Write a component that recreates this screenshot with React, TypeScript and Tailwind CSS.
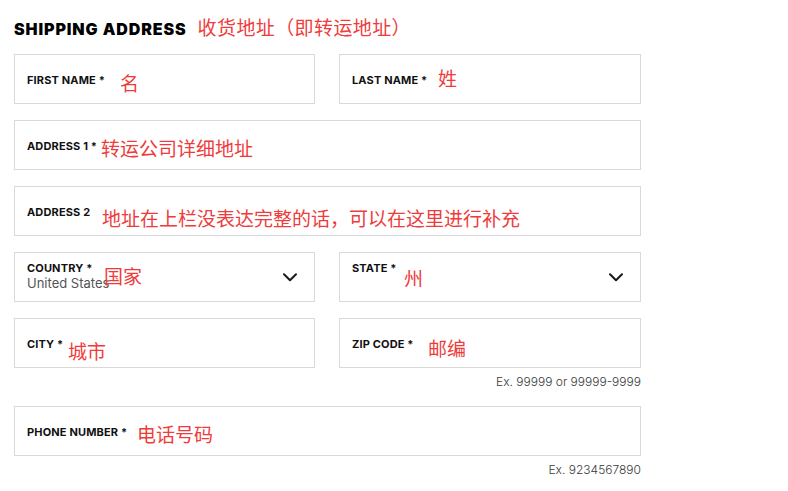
import type { ReactNode } from 'react'

const LATIN = "font-['Inter',_'Noto_Sans',_sans-serif]"
const NOTE = "font-['Noto_Sans_CJK_SC',_sans-serif] text-[19px] leading-none text-[#ef3b3b]"

type NoteProps = { text: string; className: string }

// red annotation laid over the field, like a marked-up screenshot
function Note({ text, className }: NoteProps) {
  return <span className={`absolute whitespace-nowrap ${NOTE} ${className}`}>{text}</span>
}

function Chevron() {
  return (
    <svg width="14" height="9" viewBox="0 0 14 9" fill="none" className="absolute right-[17px] top-[20px]">
      <path d="M1 1.2l6 6 6-6" stroke="#1a1a1a" strokeWidth="2" strokeLinecap="round" strokeLinejoin="round" />
    </svg>
  )
}

function Field({ label, children, className = '' }: { label: string; children?: ReactNode; className?: string }) {
  return (
    <div className={`relative flex h-[50px] items-center border border-[#d9d9d9] bg-white pl-[12px] pt-[2px] ${className}`}>
      <span className={`${LATIN} text-[11px] font-bold tracking-[0.15px] text-[#111]`}>{label}</span>
      {children}
    </div>
  )
}

function SelectField({ label, value, children }: { label: string; value?: string; children?: ReactNode }) {
  return (
    <div className="relative h-[50px] border border-[#d9d9d9] bg-white pl-[12px] pt-[8px]">
      <div className={`${LATIN} text-[11px] leading-[14px] font-bold tracking-[0.15px] text-[#111]`}>{label}</div>
      {value && <div className={`${LATIN} text-[13px] leading-[16px] text-[#555]`}>{value}</div>}
      <Chevron />
      {children}
    </div>
  )
}

function Hint({ text }: { text: string }) {
  return (
    <div className={`${LATIN} mt-[7px] text-right text-[12px] leading-[14px] font-light text-[#3a3a3a]`}>{text}</div>
  )
}

export default function App() {
  return (
    <div className="min-h-[491px] w-[788px] bg-white">
      <div className="w-[641px] pl-[14px] pt-[17px]">
        <div className="flex h-[37px] items-baseline gap-[11px]">
          <h2 className={`${LATIN} text-[16px] leading-[20px] font-black tracking-[0.9px] text-black`}>SHIPPING ADDRESS</h2>
          <span className="font-['Noto_Sans_CJK_SC',_sans-serif] text-[19px] leading-[20px] tracking-[0.4px] text-[#ef3b3b]">
            收货地址（即转运地址）
          </span>
        </div>

        <div className="flex flex-col gap-[16px]">
          <div className="grid grid-cols-[301px_1fr] gap-[24px]">
            <Field label="FIRST NAME *">
              <Note text="名" className="left-[105px] top-[18px]" />
            </Field>
            <Field label="LAST NAME *">
              <Note text="姓" className="left-[98px] top-[13px]" />
            </Field>
          </div>

          <Field label="ADDRESS 1 *">
            <Note text="转运公司详细地址" className="left-[86px] top-[17px]" />
          </Field>

          <Field label="ADDRESS 2">
            <Note text="地址在上栏没表达完整的话，可以在这里进行补充" className="left-[87px] top-[21px]" />
          </Field>

          <div className="grid grid-cols-[301px_1fr] gap-[24px]">
            <SelectField label="COUNTRY *" value="United States">
              <Note text="国家" className="left-[89px] top-[13px]" />
            </SelectField>
            <SelectField label="STATE *">
              <Note text="州" className="left-[64px] top-[15px]" />
            </SelectField>
          </div>

          <div>
            <div className="grid grid-cols-[301px_1fr] gap-[24px]">
              <Field label="CITY *">
                <Note text="城市" className="left-[53px] top-[22px]" />
              </Field>
              <Field label="ZIP CODE *">
                <Note text="邮编" className="left-[88px] top-[19px]" />
              </Field>
            </div>
            <Hint text="Ex. 99999 or 99999-9999" />
          </div>

          <div className="mt-[1px]">
            <Field label="PHONE NUMBER *">
              <Note text="电话号码" className="left-[122px] top-[17px]" />
            </Field>
            <Hint text="Ex. 9234567890" />
          </div>
        </div>
      </div>
    </div>
  )
}
